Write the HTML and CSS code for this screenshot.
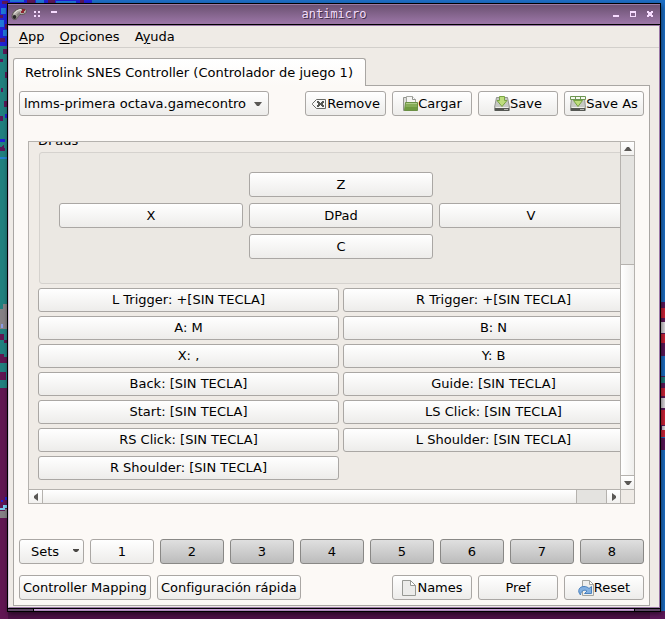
FILE: index.html
```html
<!DOCTYPE html>
<html lang="es">
<head>
<meta charset="utf-8">
<title>antimicro</title>
<link rel="stylesheet" href="styles.css">
</head>
<body>
<svg class="wallpaper" viewBox="0 0 665 619" preserveAspectRatio="none" shape-rendering="crispEdges" aria-hidden="true">
  <rect width="665" height="619" fill="#1d6fc6"/>
  <rect y="606" width="660" height="13" fill="#4c1045"/>
  <path fill="#2021d6" d="M0 0h92v4H0zM0 0h8v46H0z"/>
  <path fill="#1f78d8" d="M10 0h14v2H10zM36 0h8v3h-8zM56 1h20v3H56zM1 8h5v6H1zM0 20h4v7H0zM3 30h5v6H3z"/>
  <path fill="#5c1759" d="M2 1h6v3H2zM27 0h8v3h-8zM48 0h7v4h-7zM80 0h4v3h-4zM0 15h3v3H0zM5 24h3v5H5zM0 38h5v4H0z"/>
  <rect y="46" width="8" height="334" fill="#218080"/>
  <path fill="#5c1759" d="M3 49h4v5H3zM0 59h3v3H0zM5 72h3v6H5zM1 88h2v4H1zM4 101h4v6H4zM0 116h3v5H0zM3 145h1v3h1v3H0v-4h2z"/>
  <path fill="#2021d6" d="M0 139h5v3H0zM5 114h3v4H5z"/>
  <path fill="#2482d2" d="M0 157h8v2H0z"/>
  <path fill="#868186" d="M3 304h5v25H0v-20h3z"/>
  <path fill="#8c9ae8" d="M1 324h2v4H1z"/>
  <path fill="#611653" d="M0 334h4v6H0zM4 340h4v3H4zM0 354h4v3h4v6H0zM0 372h6v8H0zM0 388h8v231H0z"/>
  <path fill="#218080" d="M0 380h8v8H0z"/>
  <path fill="#7ccdf0" d="M3 505h5v3H5v2H0v-2h3z"/>
  <path fill="#868186" d="M5 509h3v9H0v-7h5z"/>
  <path fill="#2021d6" d="M1 500h2v2H1zM5 497h2v3H5z"/>
  <rect x="660" y="302" width="5" height="133" fill="#5c1759"/>
  <path fill="#d02437" d="M661 308h4v10h-4zM661 334h4v9h-4zM661 388h4v8h-4zM661 410h4v15h-4z"/>
  <path fill="#dedade" d="M661 322h4v11h-4zM661 398h4v10h-4zM662 426h3v4h-3z"/>
  <rect x="661" y="356" width="4" height="20" fill="#1d6fc6"/>
  <rect x="661" y="377" width="4" height="6" fill="#218080"/>
  <path fill="#d02437" d="M661 430h4v7h-4z"/>
  <rect x="661" y="438" width="4" height="12" fill="#5c1759"/>
  <rect x="650" y="611" width="15" height="8" fill="#5c1759"/>
</svg>

<main class="window">
  <header class="titlebar">
    <div class="title-left">
      <svg class="pad-icon" width="16" height="14" viewBox="0 0 16 14" aria-hidden="true">
        <path d="M1 10C1 5 5 1.500 11 1.500c4 0 5 2 4 4-1 2-4 2-6 2-2 1-2 3-3 4-2 2-5 1-5-1.500z" fill="#b5b0aa" stroke="#5b5553"/>
        <path d="M3.500 6.500C5 4 7 3 10 2.500" fill="none" stroke="#f0ede8"/>
        <path d="M6 8.500l3-3" stroke="#8a8580" stroke-width="2"/>
        <circle cx="3.500" cy="10" r="2" fill="#292728"/>
        <path d="M11 2h3v2h-3zM10 4h3v2h-3z" fill="#8e2631"/>
      </svg>
      <button class="title-button" aria-label="Sticky"><svg width="6" height="6" viewBox="0 0 6 6"><path fill="#f7dcff" d="M0 0h2v2H0zM4 0h2v2H4zM0 4h2v2H0zM4 4h2v2H4z"/></svg></button>
      <button class="title-button shade" aria-label="Shade"><svg width="6" height="6" viewBox="0 0 6 6"><path fill="#f7dcff" d="M0 0h6v2H0z"/></svg></button>
    </div>
    <h1 class="title">antimicro</h1>
    <div class="title-right">
      <button class="title-button" aria-label="Minimize"><svg width="6" height="6" viewBox="0 0 6 6"><path fill="#f7dcff" d="M0 4h6v2H0z"/></svg></button>
      <button class="title-button" aria-label="Maximize"><svg width="6" height="6" viewBox="0 0 6 6"><path fill="#f7dcff" fill-rule="evenodd" d="M0 0h6v6H0zM1 2v3h4V2z"/></svg></button>
      <button class="title-button" aria-label="Close"><svg width="6" height="6" viewBox="0 0 6 6"><path fill="#f7dcff" d="M0 0h2v1h2V0h2v2H5v2h1v2H4V5H2v1H0V4h1V2H0z"/></svg></button>
    </div>
  </header>

  <div class="client">
    <nav class="menubar">
      <button class="menu"><u>A</u>pp</button>
      <button class="menu"><u>O</u>pciones</button>
      <button class="menu">A<u>y</u>uda</button>
    </nav>

    <div class="tabs"><button class="tab">Retrolink SNES Controller (Controlador de juego 1)</button></div>

    <section class="panel">
      <div class="toolbar">
        <div class="combo">
          <select class="profile" aria-label="Profile"><option>lmms-primera octava.gamecontro</option></select>
          <svg class="combo-arrow" width="8" height="5" viewBox="0 0 8 5" aria-hidden="true"><path fill="#5a5855" d="M0 0h8L5 4H3z"/></svg>
        </div>
        <button class="button fit">
          <svg width="16" height="16" viewBox="0 0 16 16" aria-hidden="true"><path d="M5.500 3.500h9v9h-9l-4-4v-1z" fill="#f6f6f5" stroke="#666864"/><path d="M6 5h2v1h1v1h1V6h1V5h2v2h-1v2h1v2h-2v-1h-1V9H9v1H8v1H6V9h1V7H6z" fill="#555753"/></svg>Remove</button>
        <button class="button">
          <svg width="16" height="16" viewBox="0 0 16 16" aria-hidden="true"><path d="M1.500 14.500v-13h4v2h8v11z" fill="#dededb" stroke="#93958f"/><path d="M4.500 10V.500h6l3 3V8" fill="#f5f5f3" stroke="#a3a59f"/><path d="M10.500.500v3h3" fill="#fff" stroke="#93958f"/><path d="M3.500 6.500h12v8H2.500z" fill="#86ad57" stroke="#6b9044"/><path d="M3 12.500h12" stroke="#6f9a40" stroke-width="3"/><path d="M4 7.500h11" stroke="#aecb8a"/></svg>Cargar</button>
        <button class="button">
          <svg width="16" height="16" viewBox="0 0 16 16" aria-hidden="true"><path d="M2.500 1.500h11l2 10v3h-15v-3z" fill="#c6c8c3" stroke="#92948f"/><path d="M1 12h14v3H1z" fill="#555753"/><path d="M2 11.500h12" stroke="#f0f0ec"/><path d="M10 13.500h4" stroke="#b3b5af"/><path d="M5.500.500h5v4h2.500L8 10.500 3 4.500h2.500z" fill="#bddd7c" stroke="#78a344"/></svg>Save</button>
        <button class="button">
          <svg width="16" height="16" viewBox="0 0 16 16" aria-hidden="true"><path d="M1.500 2.500h13l1 9v3H.500v-3z" fill="#c6c8c3" stroke="#92948f"/><path d="M1 12h14v3H1z" fill="#555753"/><path d="M2 11.500h12" stroke="#f0f0ec"/><path d="M10 13.500h4" stroke="#b3b5af"/><path d="M.500.500h15v3H.500z" fill="#f5f8ef" stroke="#6d9651"/><path d="M5.500.500v3M10.500.500v3" stroke="#6d9651"/><path d="M3.500 4.500h9L8 10.500z" fill="#bddd7c" stroke="#78a344"/></svg>Save As</button>
      </div>

      <div class="scroll-area">
        <div class="viewport">
          <div class="mapping">
            <h2 class="group-title">DPads</h2>
            <div class="dpad">
              <button class="button up">Z</button>
              <button class="button left">X</button>
              <button class="button center">DPad</button>
              <button class="button right">V</button>
              <button class="button down">C</button>
            </div>
            <div class="bindings">
              <button class="button">L Trigger: +[SIN TECLA]</button>
              <button class="button">R Trigger: +[SIN TECLA]</button>
              <button class="button">A: M</button>
              <button class="button">B: N</button>
              <button class="button">X: ,</button>
              <button class="button">Y: B</button>
              <button class="button">Back: [SIN TECLA]</button>
              <button class="button">Guide: [SIN TECLA]</button>
              <button class="button">Start: [SIN TECLA]</button>
              <button class="button">LS Click: [SIN TECLA]</button>
              <button class="button">RS Click: [SIN TECLA]</button>
              <button class="button">L Shoulder: [SIN TECLA]</button>
              <button class="button">R Shoulder: [SIN TECLA]</button>
            </div>
          </div>
        </div>
        <div class="vbar">
          <button class="step" aria-label="Up"><svg width="8" height="4" viewBox="0 0 8 4"><path fill="#5a5855" d="M0 4h8L5 0H3z"/></svg></button>
          <div class="slot"></div>
          <div class="thumb"></div>
          <button class="step" aria-label="Down"><svg width="8" height="4" viewBox="0 0 8 4"><path fill="#5a5855" d="M0 0h8L5 4H3z"/></svg></button>
        </div>
        <div class="hbar">
          <button class="step" aria-label="Left"><svg width="4" height="8" viewBox="0 0 4 8"><path fill="#5a5855" d="M4 0v8L0 5V3z"/></svg></button>
          <div class="thumb"></div>
          <div class="slot"></div>
          <button class="step" aria-label="Right"><svg width="4" height="8" viewBox="0 0 4 8"><path fill="#5a5855" d="M0 0v8l4-3V3z"/></svg></button>
        </div>
        <div class="corner"></div>
      </div>

      <div class="sets">
        <button class="button sets-menu">Sets<svg class="sets-arrow" width="6" height="4" viewBox="0 0 6 4" aria-hidden="true"><path fill="#4a4845" d="M0 0h6v1L4 3H2L0 1z"/></svg></button>
        <button class="button">1</button>
        <button class="button off">2</button>
        <button class="button off">3</button>
        <button class="button off">4</button>
        <button class="button off">5</button>
        <button class="button off">6</button>
        <button class="button off">7</button>
        <button class="button off">8</button>
      </div>

      <div class="actions">
        <button class="button fit">Controller Mapping</button>
        <button class="button fit push">Configuración rápida</button>
        <button class="button">
          <svg width="16" height="16" viewBox="0 0 16 16" aria-hidden="true"><path d="M1.500.500h8l5 5v10h-13z" fill="#ececea" stroke="#979994"/><path d="M9.500.500v5h5z" fill="#fff" stroke="#979994"/></svg>Names</button>
        <button class="button">Pref</button>
        <button class="button">
          <svg width="16" height="16" viewBox="0 0 16 16" aria-hidden="true"><path d="M4.500.500h7l4 4v11h-11z" fill="#efefed" stroke="#a3a5a1"/><path d="M11.500.500v4h4z" fill="#fff" stroke="#a3a5a1"/><path d="M2.500 15C-1 11 1 6.500 6 6.500c2 0 3.500.500 5 2l2.500-2v7H6.500L9 11C7 9.500 3 10 2.500 15z" fill="#82afdf" stroke="#4a82bf"/></svg>Reset</button>
      </div>
    </section>
  </div>

  <footer class="handle"><span class="grip"></span><span class="bar"></span><span class="grip"></span></footer>
</main>
</body>
</html>
```
FILE: styles.css
```css
* {
  box-sizing: border-box;
}

body {
  margin: 0;
  height: 100vh;
  padding: 3px 4px 7px 7px;
  font: 13px/16px "DejaVu Sans", sans-serif;
  color: #000;
  overflow: hidden;
}

button {
  font: inherit;
  color: inherit;
  padding: 0;
  border: 0;
  background: none;
  white-space: nowrap;
}

svg {
  display: block;
  flex: none;
}

.wallpaper {
  position: absolute;
  inset: 0;
  width: 100%;
  height: 100%;
  z-index: -1;
}

.window {
  display: flex;
  flex-direction: column;
  height: 100%;
  border: 1px solid #000;
  box-shadow: 1px 2px 5px rgba(0, 0, 0, 0.5);
}

.titlebar {
  display: grid;
  grid-template-columns: 1fr auto 1fr;
  align-items: center;
  height: 21px;
  flex: none;
  border-bottom: 1px solid #000;
  box-shadow: inset 0 1px #9a7aa4;
  background: linear-gradient(#69506f, #9d77a8);
}

.title {
  margin: 0;
  font: 12px/16px "DejaVu Sans Mono", monospace;
  color: #f3ddfa;
  text-shadow: 1px 1px #40304a;
}

.title-left,
.title-right {
  display: flex;
  align-items: center;
}

.title-left {
  gap: 7px;
  padding-left: 3px;
}

.title-right {
  justify-content: flex-end;
  gap: 11px;
  padding-right: 7px;
}

.shade {
  margin-left: 4px;
}

.client {
  display: flex;
  flex-direction: column;
  flex: 1;
  min-height: 0;
  border: 1px solid #9a77a6;
  border-left-color: #d9c6e0;
  background: #efebe6;
}

.menubar {
  display: flex;
  gap: 15px;
  height: 22px;
  flex: none;
  padding: 0 10px;
  border-bottom: 1px solid #d2cfcb;
}

.menu u {
  text-underline-offset: 2px;
}

.tabs {
  display: flex;
  flex: none;
  padding: 10px 4px 0;
}

.tab {
  position: relative;
  z-index: 1;
  height: 28px;
  margin-bottom: -1px;
  padding: 0 12px 0 11px;
  border: 1px solid #a9a6a3;
  border-bottom: 0;
  border-radius: 3px 3px 0 0;
  background: linear-gradient(#fff, #fcf9f6);
}

.panel {
  display: flex;
  flex-direction: column;
  flex: 1;
  min-height: 0;
  margin: 0 9px 1px 4px;
  padding: 5px;
  border: 1px solid #a9a6a3;
  background: #fcf9f6;
}

.toolbar,
.sets,
.actions {
  display: flex;
  gap: 6px;
  flex: none;
}

.button {
  display: flex;
  align-items: center;
  justify-content: center;
  height: 25px;
  border: 1px solid #aaa7a4;
  border-radius: 3px;
  background: linear-gradient(#fff, #edecea);
}

.toolbar .button,
.actions .button {
  width: 80px;
}

.toolbar .fit,
.actions .fit {
  width: auto;
  padding: 0 5px;
}

.actions .fit {
  padding: 0 3px;
}

.actions .push {
  margin-right: auto;
}

.combo {
  position: relative;
  flex: 1;
  margin-right: 30px;
}

.profile {
  appearance: none;
  width: 100%;
  height: 25px;
  padding: 0 20px 0 4px;
  border: 1px solid #aaa7a4;
  border-radius: 3px;
  background: linear-gradient(#fff, #edecea);
  color: inherit;
  font: inherit;
}

.combo-arrow {
  position: absolute;
  right: 7px;
  top: 11px;
}

.scroll-area {
  display: grid;
  grid-template-columns: 1fr 14px;
  grid-template-rows: 1fr 14px;
  flex: 1;
  min-height: 0;
  margin: 25px 9px 35px;
  border: 1px solid #b5b2ae;
}

.viewport {
  display: flex;
  flex-direction: column;
  justify-content: flex-end;
  min-width: 0;
  min-height: 0;
  overflow: hidden;
  background: #efebe6;
}

.mapping {
  min-width: calc(100% + 33px);
  width: max-content;
  padding: 9px;
}

.group-title {
  margin: 0 0 3px;
  font: inherit;
}

.dpad {
  display: grid;
  grid-template-columns: repeat(3, 1fr);
  grid-template-areas: ". up ." "left center right" ". down .";
  gap: 6px;
  margin: 0 1px 4px;
  padding: 19px;
  padding-bottom: 24px;
  border: 1px solid #d5d2ce;
  border-radius: 3px;
  background: #ebe8e3;
}

.up { grid-area: up; }
.left { grid-area: left; }
.center { grid-area: center; }
.right { grid-area: right; }
.down { grid-area: down; }

.bindings {
  display: grid;
  grid-template-columns: repeat(2, 1fr);
  gap: 4px;
}

.bindings .button {
  height: 24px;
}

.vbar,
.hbar {
  display: flex;
}

.vbar {
  flex-direction: column;
  border-left: 1px solid #b5b2ae;
}

.hbar {
  border-top: 1px solid #b5b2ae;
}

.step {
  display: grid;
  place-items: center;
  flex: 0 0 13px;
  background: linear-gradient(#fff, #f2f1ef);
}

.slot {
  background: #e4e3e0;
}

.vbar .slot {
  flex: 108;
  border-top: 1px solid #b5b2ae;
}

.vbar .thumb {
  flex: 211;
  border: solid #b5b2ae;
  border-width: 1px 0;
  background: linear-gradient(to right, #fff, #efeeec);
}

.hbar .thumb {
  flex: 534;
  border: solid #b5b2ae;
  border-width: 0 1px;
  background: linear-gradient(#fff, #efeeec);
}

.hbar .slot {
  flex: 29;
  border-right: 1px solid #b5b2ae;
}

.corner {
  border: solid #b5b2ae;
  border-width: 1px 0 0 1px;
  background: #efebe6;
}

.sets {
  margin-bottom: 11px;
}

.sets .button {
  flex: 1;
}

.sets .sets-menu {
  position: relative;
  flex: 0 0 65px;
  padding-right: 13px;
}

.sets-arrow {
  position: absolute;
  right: 4px;
  top: 9px;
}

.sets .off {
  border-color: #898886;
  background: linear-gradient(#dfdfdf, #bcbcbc);
}

.handle {
  display: flex;
  flex: none;
  height: 3px;
  border-top: 1px solid #000;
}

.grip {
  width: 25px;
  background: #604967;
}

.bar {
  flex: 1;
  border: solid #000;
  border-width: 0 1px;
  background: linear-gradient(#d9afe6, #9a77a6);
}
```
